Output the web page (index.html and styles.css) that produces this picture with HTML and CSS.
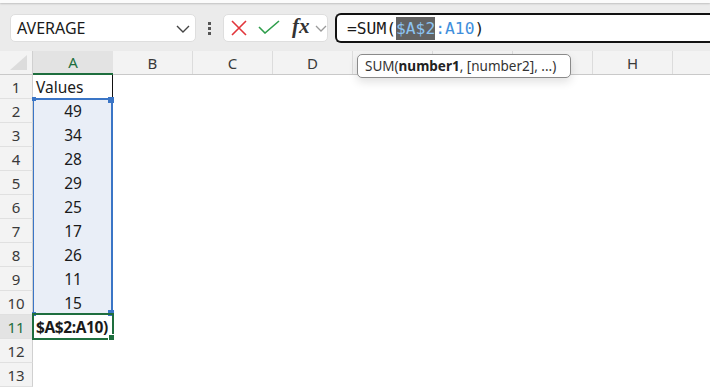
FILE: index.html
```html
<!DOCTYPE html>
<html>
<head>
<meta charset="utf-8">
<link rel="stylesheet" href="styles.css">
</head>
<body>
<div class="strip"></div>
<div class="bar">
  <div class="namebox">
    <span class="name">AVERAGE</span>
    <svg class="chev" width="14" height="8" viewBox="0 0 14 8"><path d="M1 1 L7 7 L13 1" fill="none" stroke="#444" stroke-width="1.4"/></svg>
  </div>
  <div class="dots"><i></i><i></i><i></i></div>
  <div class="actions">
    <svg class="ico-x" width="16" height="16" viewBox="0 0 16 16"><path d="M1 1 L15 15 M15 1 L1 15" stroke="#e2353b" stroke-width="1.6" fill="none"/></svg>
    <svg class="ico-ok" width="22" height="14" viewBox="0 0 22 14"><path d="M1 7 L7 13 L21 1" stroke="#2f9e4c" stroke-width="1.6" fill="none"/></svg>
    <span class="fx">fx</span>
    <svg class="chev2" width="12" height="7" viewBox="0 0 12 7"><path d="M1 1 L6 6 L11 1" fill="none" stroke="#9a9a9a" stroke-width="1.3"/></svg>
  </div>
  <div class="formula"><span>=SUM(</span><span class="ref hl">$A$2</span><span class="ref">:A10</span><span>)</span></div>
</div>
<div class="sheet">
  <div class="corner"><svg width="18" height="16" viewBox="0 0 18 16"><path d="M17 0 L17 15 L0 15 Z" fill="#dcdcdc"/></svg></div>
  <div class="colh sel">A</div>
  <div class="colhs">
    <div class="colh">B</div><div class="colh">C</div><div class="colh">D</div><div class="colh"></div><div class="colh"></div><div class="colh"></div><div class="colh">H</div><div class="colh last"></div>
  </div>

  <div class="rowh">1</div><div class="cell a1">Values</div><div class="rest"></div>
  <div class="rowh">2</div><div class="cell num inr">49</div><div class="rest"></div>
  <div class="rowh">3</div><div class="cell num inr">34</div><div class="rest"></div>
  <div class="rowh">4</div><div class="cell num inr">28</div><div class="rest"></div>
  <div class="rowh">5</div><div class="cell num inr">29</div><div class="rest"></div>
  <div class="rowh">6</div><div class="cell num inr">25</div><div class="rest"></div>
  <div class="rowh">7</div><div class="cell num inr">17</div><div class="rest"></div>
  <div class="rowh">8</div><div class="cell num inr">26</div><div class="rest"></div>
  <div class="rowh">9</div><div class="cell num inr">11</div><div class="rest"></div>
  <div class="rowh">10</div><div class="cell num inr">15</div><div class="rest"></div>
  <div class="rowh selr">11</div><div class="cell active">$A$2:A10)</div><div class="rest"></div>
  <div class="rowh">12</div><div class="cell"></div><div class="rest"></div>
  <div class="rowh">13</div><div class="cell"></div><div class="rest"></div>

  <div class="range"><i class="h tl"></i><i class="h tr"></i><i class="h bl"></i><i class="h br"></i></div>
  <div class="activebox"><i class="gh"></i></div>
  <div class="tip">SUM(<b>number1</b>, [number2], ...)</div>
</div>
</body>
</html>
```
FILE: styles.css
```css
html, body { margin: 0; padding: 0; }
body {
  width: 710px; height: 387px; overflow: hidden;
  background: #fff;
  font-family: "Noto Sans", "Open Sans", sans-serif;
}
.strip {
  height: 3px; background: #fbfbfb;
  box-shadow: 0 1px 2px rgba(0,0,0,0.18);
  position: relative; z-index: 1;
}
.bar {
  height: 48px; box-sizing: border-box;
  background: #ebebeb;
  display: flex; align-items: flex-start;
  padding: 11px 0 0 10px;
  overflow: hidden;
}
.namebox {
  width: 186px; height: 28px; box-sizing: border-box; flex: none;
  background: #fff; border: 1px solid #dedede; border-radius: 5px;
  display: flex; align-items: center; justify-content: space-between;
  padding: 0 5px 0 6px;
}
.name { font-size: 16px; color: #1a1a1a; }
.chev { margin-top: 2px; }
.dots {
  width: 27px; height: 28px; display: flex; flex-direction: column; flex: none;
  align-items: center; justify-content: center; gap: 2px;
}
.dots i { display: block; width: 3px; height: 3px; background: #555; }
.actions {
  width: 105px; height: 28px; box-sizing: border-box; flex: none;
  background: #fff; border: 1px solid #dedede; border-radius: 5px;
  display: flex; align-items: center; padding-left: 7px;
}
.ico-x { margin-right: 11px; }
.ico-ok { margin-right: 12px; margin-top: -2px; }
.fx {
  font-family: "Liberation Serif", "DejaVu Serif", serif;
  font-style: italic; font-weight: bold; font-size: 21px; color: #333; margin-right: 5px;
  line-height: 1; margin-top: -3px;
}
.chev2 { margin-top: 1px; }
.formula {
  margin-left: 7px; margin-top: -1px;
  flex: 1; min-width: 0; height: 30px; box-sizing: border-box;
  border: 2px solid #111; border-right: none; border-radius: 6px 0 0 6px;
  background: #fff;
  display: flex; align-items: center; padding-left: 10px;
  font-family: "DejaVu Sans Mono", "Liberation Mono", monospace;
  font-size: 16.3px; color: #1a1a1a;
}
.formula .ref { color: #3f8fdc; }
.formula .hl { background: #626262; color: #8cc4f2; padding: 2px 0; }

.sheet {
  position: relative;
  display: grid;
  grid-template-columns: 33px 80px minmax(0, 1fr);
  grid-template-rows: 24px;
  grid-auto-rows: 24px;
  font-size: 15px; color: #1a1a1a;
}
.corner, .colh, .colhs, .rowh { background: #f3f3f3; }
.corner {
  border-right: 1px solid #d0d0d0; border-bottom: 1px solid #c9c9c9;
  box-sizing: border-box; display: flex; align-items: flex-end; justify-content: flex-end;
  padding: 0 4px 3px 0;
}
.colhs { display: flex; border-bottom: 1px solid #c9c9c9; box-sizing: border-box; overflow: hidden; min-width: 0; }
.colh {
  width: 80px; flex: none; box-sizing: border-box;
  border-right: 1px solid #dcdcdc; border-bottom: 1px solid #c9c9c9;
  display: flex; align-items: center; justify-content: center;
  color: #3a3a3a; font-size: 15px;
}
.colhs .colh { border-bottom: none; }
.colh.last { flex: 1; border-right: none; }
.colh.sel {
  background: #e3e3e3; color: #1e6e3e;
  border-bottom: 2px solid #1e6e3e; border-right: none; width: auto;
}
.rowh {
  box-sizing: border-box; border-right: 1px solid #d0d0d0; border-bottom: 1px solid #e0e0e0;
  display: flex; align-items: center; justify-content: center;
  color: #3a3a3a; font-size: 15px;
}
.rowh.selr { background: #e3e3e3; color: #1e6e3e; }
.cell {
  box-sizing: border-box; display: flex; align-items: center;
  padding-left: 3px; white-space: nowrap; font-size: 15.5px;
}
.cell.a1 { border-right: 1px solid #111; }
.cell.num { justify-content: center; padding: 0; }
.cell.inr { background: #e9eef7; }
.cell.active { font-weight: bold; letter-spacing: -0.4px; }

.range {
  position: absolute; left: 33px; top: 47px; width: 80px; height: 217px;
  box-sizing: border-box;
  border: 2px solid #3a75c6; border-left-width: 1px;
}
.range .h { position: absolute; background: #3a75c6; display: block; }
.range .tl { left: -2px; top: -3px; width: 4px; height: 4px; }
.range .tr { right: -3px; top: -3px; width: 6px; height: 6px; }
.range .bl { left: -2px; bottom: -3px; width: 4px; height: 4px; }
.range .br { right: -3px; bottom: -3px; width: 6px; height: 6px; }
.activebox {
  position: absolute; left: 32px; top: 262px; width: 82px; height: 27px;
  box-sizing: border-box; border: 2px solid #1e6e3e;
}
.activebox .gh {
  position: absolute; right: -3px; bottom: -3px; width: 5px; height: 5px;
  background: #1e6e3e; border: 1px solid #fff; display: block;
}
.tip {
  position: absolute; left: 357px; top: 3px; width: 214px; height: 24px;
  box-sizing: border-box; background: #fff;
  border: 1px solid #8a8a8a; border-radius: 5px;
  box-shadow: 0 4px 10px rgba(0,0,0,0.12);
  font-size: 13.5px; color: #333; padding-left: 7px;
  display: flex; align-items: center; white-space: pre;
}
.tip b { color: #222; }
```
